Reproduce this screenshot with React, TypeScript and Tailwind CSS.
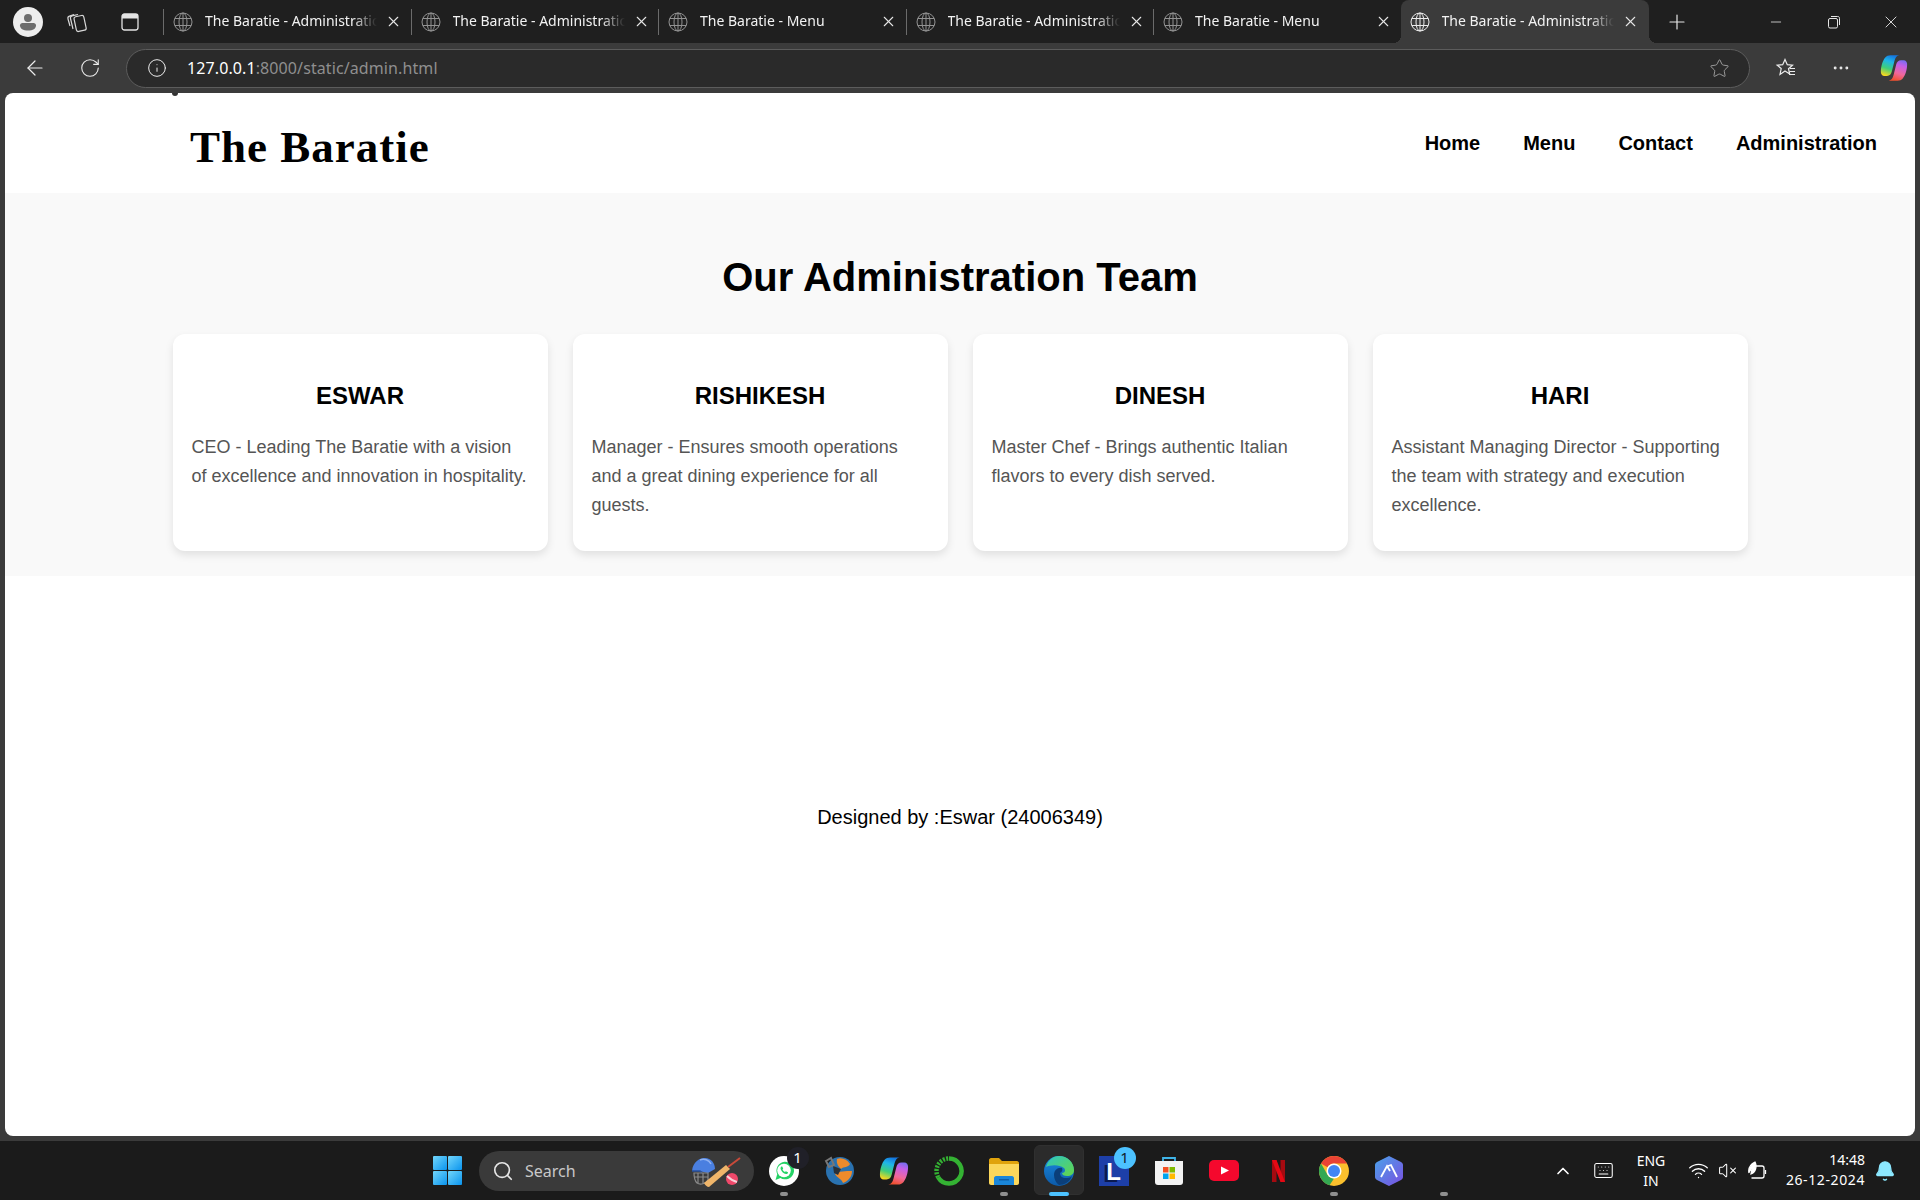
import { ArrowLeft, Bell, ChevronUp, Ellipsis, Info, Keyboard, Minus, Plus, RotateCw, Search, Star, VolumeX, Wifi, X } from 'lucide-react';
import type { ReactNode } from 'react';

const tabs = [
  { title: 'The Baratie - Administration' },
  { title: 'The Baratie - Administration' },
  { title: 'The Baratie - Menu' },
  { title: 'The Baratie - Administration' },
  { title: 'The Baratie - Menu' },
  { title: 'The Baratie - Administration', active: true },
];

const team = [
  { name: 'ESWAR', text: 'CEO - Leading The Baratie with a vision of excellence and innovation in hospitality.' },
  { name: 'RISHIKESH', text: 'Manager - Ensures smooth operations and a great dining experience for all guests.' },
  { name: 'DINESH', text: 'Master Chef - Brings authentic Italian flavors to every dish served.' },
  { name: 'HARI', text: 'Assistant Managing Director - Supporting the team with strategy and execution excellence.' },
];

function TabGlobe({ color }: { color: string }) {
  return (
    <svg width="20" height="20" viewBox="0 0 20 20" fill="none" stroke={color} strokeWidth="1">
      <circle cx="10" cy="10" r="9" />
      <ellipse cx="10" cy="10" rx="4" ry="9" />
      <path d="M1.800 6.500h16.400M1.800 13.500h16.400M10 1v18" />
    </svg>
  );
}

function CopilotIcon({ size }: { size: number }) {
  const ribbon = "M12 1.500H22C19 2 17.500 4 16.500 8L13.500 20C12.800 23 11 25 8 25H5C2.500 25 1 23 1 20.500 1 13 3.500 7 6 4 7.500 2.300 9.500 1.500 12 1.500Z";
  return (
    <svg width={size} height={size} viewBox="0 0 32 32">
      <defs>
        <linearGradient id={`cpA${size}`} x1="0.6" y1="0" x2="0.3" y2="1">
          <stop offset="0" stopColor="#1476e0" />
          <stop offset="0.3" stopColor="#1fb5e8" />
          <stop offset="0.65" stopColor="#3fcf7a" />
          <stop offset="1" stopColor="#f6d81f" />
        </linearGradient>
        <linearGradient id={`cpB${size}`} x1="0.6" y1="0" x2="0.3" y2="1">
          <stop offset="0" stopColor="#f0512f" />
          <stop offset="0.35" stopColor="#f0689a" />
          <stop offset="0.75" stopColor="#c45fe8" />
          <stop offset="1" stopColor="#7a6cf0" />
        </linearGradient>
      </defs>
      <path d={ribbon} fill={`url(#cpA${size})`} />
      <path d={ribbon} fill={`url(#cpB${size})`} transform="rotate(180 16 16)" />
    </svg>
  );
}

function Tab({ title, active }: { title: string; active?: boolean }) {
  return (
    <div
      className={
        active
          ? "relative flex h-[43px] w-[248px] shrink-0 items-center rounded-t-[8px] bg-[#3b3b3b] pl-[9px] before:absolute before:-left-2 before:bottom-0 before:size-2 before:bg-[radial-gradient(circle_at_0_0,transparent_8px,#3b3b3b_8px)] after:absolute after:-right-2 after:bottom-0 after:size-2 after:bg-[radial-gradient(circle_at_100%_0,transparent_8px,#3b3b3b_8px)]"
          : "relative flex h-[43px] w-[247.5px] shrink-0 items-center"
      }
    >
      {!active && <div className="mr-[9px] h-[26px] w-px bg-[#6b6b6b]" />}
      <TabGlobe color={active ? "#ececec" : "#929292"} />
      <span className="ml-[12px] w-[172px] overflow-hidden whitespace-nowrap pb-[2px] text-[14px] leading-[20px] text-[#f2f2f2] [mask-image:linear-gradient(to_right,black_86%,transparent_100%)]">
        {title}
      </span>
      <X size={17} strokeWidth={1.5} className="ml-[8px] text-[#e6e6e6]" />
    </div>
  );
}

function TabBar() {
  return (
    <div className="flex h-[43px] shrink-0 items-center bg-[#1f1f1f]">
      <div className="ml-[13px] flex size-[30px] items-center justify-center overflow-hidden rounded-full bg-[#ededed]">
        <svg width="22" height="22" viewBox="0 0 22 22">
          <circle cx="11" cy="7" r="4" fill="#6d6d6d" />
          <path d="M3 14.500c0-1.500 1-2.500 2.500-2.500h11c1.500 0 2.500 1 2.500 2.500 0 3-3 5-8 5s-8-2-8-5z" fill="#6d6d6d" />
        </svg>
      </div>
      <svg width="24" height="24" viewBox="0 0 24 24" fill="none" stroke="#d8d8d8" strokeWidth="1.200" className="ml-[22px]">
        <rect x="10" y="6" width="10" height="15" rx="2" transform="rotate(-12 15 13)" />
        <path d="M8 19 5.500 8.500c-.3-1.300.4-2.300 1.500-2.600L13 4.500" />
        <path d="M5 16 3 9c-.4-1.500.3-2.500 1.500-2.900L9 4.500" />
      </svg>
      <svg width="20" height="20" viewBox="0 0 20 20" fill="none" className="ml-[31px]">
        <rect x="2" y="2" width="16" height="16" rx="2.500" stroke="#e4e4e4" strokeWidth="1.300" />
        <path d="M2 4.500C2 3 3 2 4.500 2h11C17 2 18 3 18 4.500V6.500H2z" fill="#e4e4e4" />
      </svg>
      <div className="ml-[23px] flex">
        {tabs.map((tab, i) => (
          <Tab key={i} title={tab.title} active={tab.active} />
        ))}
      </div>
      <Plus size={24} strokeWidth={1.2} className="ml-[16px] text-[#e6e6e6]" />
      <Minus size={16} strokeWidth={1.2} className="ml-[79px] text-[#e6e6e6]" />
      <svg width="14" height="14" viewBox="0 0 14 14" fill="none" stroke="#e6e6e6" className="ml-[43px]">
        <rect x="1.500" y="3.500" width="9" height="9.500" rx="1.500" />
        <path d="M4 1.500h6.500c1.500 0 2 .6 2 2V10" />
      </svg>
      <X size={20} strokeWidth={1.100} className="ml-[40px] text-[#e6e6e6]" />
    </div>
  );
}

function Toolbar() {
  return (
    <div className="flex h-[50px] shrink-0 items-center bg-[#3b3b3b]">
      <ArrowLeft size={24} strokeWidth={1.2} className="ml-[23px] text-[#ececec]" />
      <RotateCw size={22} strokeWidth={1.2} className="ml-[32px] text-[#ececec]" />
      <div className="ml-[25px] flex h-[39px] w-[1624px] items-center rounded-full border border-[#5c5c5c] bg-[#2a2a2a]">
        <Info size={20} strokeWidth={1.2} className="ml-[20px] text-[#ececec]" />
        <span className="ml-[20px] text-[16px] leading-[22px] tracking-[0.1px] text-[#8f8f8f]">
          <span className="text-white">127.0.0.1</span>:8000/static/admin.html
        </span>
        <Star size={21} strokeWidth={1} className="ml-auto mr-[19px] text-[#a8a8a8]" />
      </div>
      <svg width="24" height="24" viewBox="0 0 24 24" fill="none" stroke="#ececec" strokeWidth="1.200" className="ml-[23px]">
        <path d="M12 3.500l2.300 5.200 5.200.5-4 3.500 1.200 5.300L12 15l-5 3.500 1.200-6-4-3.300 5.500-.5z" />
        <path d="M17 12.500h5M16.500 15.500h5.500M16 18.500h6" />
      </svg>
      <Ellipsis size={20} strokeWidth={1.5} className="ml-[34px] text-[#ececec]" />
      <div className="ml-[29px]">
        <CopilotIcon size={28} />
      </div>
    </div>
  );
}

function Page() {
  return (
    <div className="relative mx-[5px] flex h-[1043px] shrink-0 flex-col overflow-hidden rounded-[8px] bg-white text-black [font-family:'Liberation_Sans',Arial,sans-serif]">
      <div className="absolute left-[167px] top-0 h-[3px] w-[6px] rounded-b-full bg-[#333333]" />
      <header className="flex h-[100px] shrink-0 items-center justify-between pl-[185px] pr-[38px]">
        <h1 className="pt-[9px] text-[45px] font-bold leading-none tracking-[1px] [font-family:'Liberation_Serif','Times_New_Roman',serif]">The Baratie</h1>
        <nav className="flex gap-[43px] pb-[1px] text-[20px] font-bold">
          <span>Home</span>
          <span>Menu</span>
          <span>Contact</span>
          <span>Administration</span>
        </nav>
      </header>
      <section className="flex h-[383px] shrink-0 flex-col items-center bg-[#f9f9f9] pt-[60px]">
        <h2 className="mb-[33px] text-[40px] font-bold leading-[48px]">Our Administration Team</h2>
        <div className="grid grid-cols-[repeat(4,375px)] gap-[25px]">
          {team.map((member) => (
            <div key={member.name} className="rounded-[12px] bg-white px-[18px] pb-[32px] pt-[43px] shadow-[0_4px_8px_rgba(0,0,0,0.1)]">
              <h3 className="mb-[18px] text-center text-[24px] font-bold leading-[38px]">{member.name}</h3>
              <p className="pl-[1px] text-[18px] leading-[28.8px] text-[#555555]">{member.text}</p>
            </div>
          ))}
        </div>
      </section>
      <footer className="mt-[228px] text-center text-[20px] leading-[26px]">Designed by :Eswar (24006349)</footer>
    </div>
  );
}

function TaskItem({ children, dot, active }: { children?: ReactNode; dot?: boolean; active?: boolean }) {
  return (
    <div className="relative flex h-[59px] w-[55px] shrink-0 items-center justify-center">
      {active && <div className="absolute left-[3px] top-[4px] h-[50px] w-[50px] rounded-[6px] border border-[#303030] bg-[#2b2b2b]" />}
      <div className="relative flex items-center justify-center">{children}</div>
      {dot && <div className="absolute bottom-[4px] left-[24px] h-[4px] w-[8px] rounded-full bg-[#8f8f8f]" />}
      {active && <div className="absolute bottom-[4px] left-[18px] h-[4px] w-[20px] rounded-full bg-[#4cc2ff]" />}
    </div>
  );
}

function Taskbar() {
  return (
    <div className="flex h-[59px] shrink-0 items-center bg-[#1b1b1b] text-white">
      <svg width="29" height="29" viewBox="0 0 29 29" className="ml-[433px]">
        <defs>
          <linearGradient id="win" x1="0" y1="0" x2="1" y2="1">
            <stop offset="0" stopColor="#72d6fb" />
            <stop offset="1" stopColor="#0a94ee" />
          </linearGradient>
        </defs>
        <rect x="0" y="0" width="14" height="14" rx="1" fill="url(#win)" />
        <rect x="15" y="0" width="14" height="14" rx="1" fill="url(#win)" />
        <rect x="0" y="15" width="14" height="14" rx="1" fill="url(#win)" />
        <rect x="15" y="15" width="14" height="14" rx="1" fill="url(#win)" />
      </svg>
      <div className="ml-[17px] flex h-[40px] w-[275px] items-center rounded-full bg-[#3a3a3a]">
        <Search size={22} strokeWidth={1.8} className="ml-[13px] text-[#e6e6e6]" />
        <span className="ml-[11px] text-[16px] leading-[22px] text-[#c8c8c8]">Search</span>
        <svg width="52" height="34" viewBox="0 0 52 34" className="ml-auto mr-[12px]">
          <path d="M2 17C3 8 9 4 15 4C21 4 25 9 25 15L18 19L9 17Z" fill="#4a7fe0" />
          <path d="M10 6C14 4 19 6 21 10" fill="none" stroke="#8fb2f2" strokeWidth="1.500" />
          <path d="M2 17H10L12 19" fill="none" stroke="#27509e" strokeWidth="1.500" />
          <path d="M4 19H18V26C16 30 10 31 7 29 5 27 4 23 4 19ZM4 23H18M8 19V29M13 19V30" fill="none" stroke="#8a8a8a" strokeWidth="1.200" />
          <path d="M14 29L36 11 40 15 19 33C17 33 15 31 14 29Z" fill="#efb56a" />
          <path d="M38 13L50 4" stroke="#c94a3a" strokeWidth="2" />
          <circle cx="42" cy="25" r="6" fill="#f0486a" />
          <path d="M37 22C40 25 43 27 47 28" fill="none" stroke="#f9d0d8" strokeWidth="2" />
        </svg>
      </div>
      <div className="ml-[2px] flex">
        <TaskItem dot>
          <svg width="30" height="30" viewBox="0 0 30 30">
            <circle cx="15" cy="15" r="15" fill="#ffffff" />
            <path d="M6.500 24l1.700-5.800A8.800 8.800 0 1 1 11.500 22z" fill="#25d366" />
            <circle cx="15" cy="14.500" r="6.800" fill="#fff" />
            <path d="M12.300 10.500c-1.200 1-1 2.800.5 4.800 1.500 2 3.500 3.200 5 2.700.9-.3 1.300-1 1.200-1.700l-2.200-1.100-.8.900c-1.100-.4-2-1.400-2.500-2.500l.7-1-1-2.200z" fill="#25d366" />
          </svg>
          <div className="absolute -right-[10px] -top-[9px] flex size-[22px] items-center justify-center rounded-full bg-[#202028] text-[15px] leading-none">1</div>
        </TaskItem>
        <TaskItem>
          <svg width="30" height="30" viewBox="0 0 30 30">
            <circle cx="16" cy="15" r="14" fill="#2a72b0" />
            <path d="M13 3C17 1 23 3 26 8 24 12 20 10 17 13 15 11 12 8 13 3Z" fill="#ee8b2c" />
            <path d="M11 18C14 15 22 15 28 15 28 21 24 25 19 27 18 23 13 22 11 18Z" fill="#ee8b2c" />
            <path d="M9 10L17 13 14 19 10 17Z" fill="#2b3138" />
            <path d="M2 5L7 2 10 9 5 11Z" fill="none" stroke="#777777" strokeWidth="2" />
          </svg>
        </TaskItem>
        <TaskItem>
          <CopilotIcon size={30} />
        </TaskItem>
        <TaskItem>
          <svg width="30" height="30" viewBox="0 0 30 30" fill="none">
            <path d="M15 2.500A12.500 12.500 0 1 1 4.200 21.300" stroke="#34b233" strokeWidth="4.500" />
            <path d="M4.200 21.300A12.500 12.500 0 0 1 15 2.500" stroke="#34b233" strokeWidth="4.500" strokeDasharray="2 1.300" />
          </svg>
        </TaskItem>
        <TaskItem dot>
          <svg width="32" height="28" viewBox="0 0 32 28">
            <path d="M1 3c0-1 1-2 2-2h8l3 3h15c1 0 2 1 2 2v3H1z" fill="#e0a30c" />
            <path d="M1 7h30v19c0 1-1 2-2 2H3c-1 0-2-1-2-2z" fill="#fbd75b" />
            <path d="M6 21c0-1 1-2 2-2h16c1 0 2 1 2 2v7H6z" fill="#1a86d9" />
            <rect x="11" y="22" width="10" height="1.500" fill="#0d5ea8" />
          </svg>
        </TaskItem>
        <TaskItem active>
          <svg width="30" height="30" viewBox="0 0 30 30">
            <defs>
              <linearGradient id="edgeA" x1="0" y1="0" x2="1" y2="1">
                <stop offset="0" stopColor="#2ec6c0" />
                <stop offset="1" stopColor="#63d648" />
              </linearGradient>
              <linearGradient id="edgeB" x1="0" y1="0" x2="0" y2="1">
                <stop offset="0" stopColor="#1a8ae0" />
                <stop offset="1" stopColor="#0c5aa8" />
              </linearGradient>
            </defs>
            <circle cx="15" cy="15" r="15" fill="url(#edgeB)" />
            <path d="M2 11C4 4 9 0 15 0c8 0 15 6 15 14 0 4-3 6-7 6-3 0-5-1-5-3 3 0 4-3 2-5-5-4-14-3-18-1z" fill="url(#edgeA)" />
            <path d="M10 19c0-5 4-8 8-7 1 2 0 4-2 5 0 3 2 5 6 5 2 0 4 0 6-2-2 6-8 9-13 9-3-2-5-6-5-10z" fill="#0b3f7a" />
          </svg>
        </TaskItem>
        <TaskItem>
          <div className="flex h-[30px] w-[30px] items-end justify-center bg-[#1d3fa8] text-[24px] font-bold leading-[28px] text-white [font-family:'Liberation_Sans',Arial,sans-serif] [text-shadow:-3px_2px_0_#0a1a50]">L</div>
          <div className="absolute -right-[7px] -top-[9px] flex size-[22px] items-center justify-center rounded-full bg-[#4cc2ff] text-[15px] leading-none text-[#10202c]">1</div>
        </TaskItem>
        <TaskItem>
          <svg width="30" height="30" viewBox="0 0 30 30">
            <path d="M9 6V2h12v4" fill="none" stroke="#3fb4e8" strokeWidth="1.800" />
            <path d="M1 5h28v21c0 2-1 3-3 3H4c-2 0-3-1-3-3z" fill="#f3f3f3" />
            <rect x="9" y="11" width="5.500" height="5.500" fill="#f25022" />
            <rect x="15.500" y="11" width="5.500" height="5.500" fill="#7fba00" />
            <rect x="9" y="17.500" width="5.500" height="5.500" fill="#00a4ef" />
            <rect x="15.500" y="17.500" width="5.500" height="5.500" fill="#ffb900" />
          </svg>
        </TaskItem>
        <TaskItem>
          <svg width="30" height="22" viewBox="0 0 30 22">
            <rect width="30" height="21" rx="5" fill="#f5082d" />
            <path d="M12 6.500l8 4-8 4z" fill="#fff" />
          </svg>
        </TaskItem>
        <TaskItem>
          <svg width="13" height="22" viewBox="0 0 13 22">
            <path d="M0 0h4.500v22H0z" fill="#a50a10" />
            <path d="M8.500 0H13v22H8.500z" fill="#a50a10" />
            <path d="M0 0h4.500L13 22H8.500z" fill="#e50914" />
          </svg>
        </TaskItem>
        <TaskItem dot>
          <svg width="30" height="30" viewBox="0 0 30 30">
            <circle cx="15" cy="15" r="15" fill="#fbc02d" />
            <path d="M15 0a15 15 0 0 1 13 7.500H15a7.500 7.500 0 0 0-6.500 3.750L2 7.500A15 15 0 0 1 15 0z" fill="#ea4335" />
            <path d="M2 7.500l6.500 11.250A7.500 7.500 0 0 0 15 22.500L10.500 29.300A15 15 0 0 1 2 7.500z" fill="#34a853" />
            <circle cx="15" cy="15" r="7.500" fill="#fff" />
            <circle cx="15" cy="15" r="6" fill="#4285f4" />
          </svg>
        </TaskItem>
        <TaskItem>
          <svg width="28" height="30" viewBox="0 0 28 30">
            <defs>
              <linearGradient id="hexApp" x1="0" y1="0" x2="1" y2="1">
                <stop offset="0" stopColor="#4aa3ea" />
                <stop offset="1" stopColor="#7a4fe0" />
              </linearGradient>
            </defs>
            <path d="M14 0l12 6c1.500 1 2 2 2 3v12c0 1-.5 2-2 3l-12 6-12-6c-1.500-1-2-2-2-3V9c0-1 .5-2 2-3z" fill="url(#hexApp)" />
            <path d="M6 21l6-11 3 5M13 10l3-1 6 12" fill="none" stroke="#fff" strokeWidth="1.800" />
          </svg>
        </TaskItem>
        <TaskItem dot />
      </div>
      <div className="ml-auto flex items-center">
        <div className="flex w-[40px] justify-center">
          <ChevronUp size={20} strokeWidth={2} />
        </div>
        <div className="flex w-[40px] justify-center">
          <Keyboard size={21} strokeWidth={1.2} />
        </div>
        <div className="w-[56px] text-center text-[14px] leading-[20px]">
          <div>ENG</div>
          <div>IN</div>
        </div>
        <div className="flex w-[38px] justify-center">
          <Wifi size={21} strokeWidth={1.5} />
        </div>
        <div className="flex w-[20px] justify-center">
          <VolumeX size={19} strokeWidth={1.3} />
        </div>
        <div className="flex w-[42px] justify-center">
          <svg width="22" height="20" viewBox="0 0 22 20" fill="none" stroke="#fff" strokeWidth="1.300">
            <path d="M7 5H15c1.500 0 2 .6 2 2v8c0 1.400-.5 2-2 2H4.500" />
            <path d="M18.500 9v4" />
            <path d="M2 12C1 7 4 3 8 1c2 4 1 10-4 12 0-3 1-5 3-7" fill="#fff" />
          </svg>
        </div>
        <div className="w-[86px] pb-[2px] text-right text-[14px] leading-[20px]">
          <div>14:48</div>
          <div className="tracking-[0.6px]">26-12-2024</div>
        </div>
        <div className="ml-[6px] mr-[21px] flex w-[28px] justify-center">
          <Bell size={22} strokeWidth={1.5} className="fill-[#8ce8ff] text-[#8ce8ff]" />
        </div>
      </div>
    </div>
  );
}

export default function App() {
  return (
    <div className="flex h-[1200px] w-[1920px] flex-col overflow-hidden bg-[#3b3b3b] [font-family:'Noto_Sans',sans-serif]">
      <TabBar />
      <Toolbar />
      <Page />
      <div className="h-[5px] shrink-0" />
      <Taskbar />
    </div>
  );
}
